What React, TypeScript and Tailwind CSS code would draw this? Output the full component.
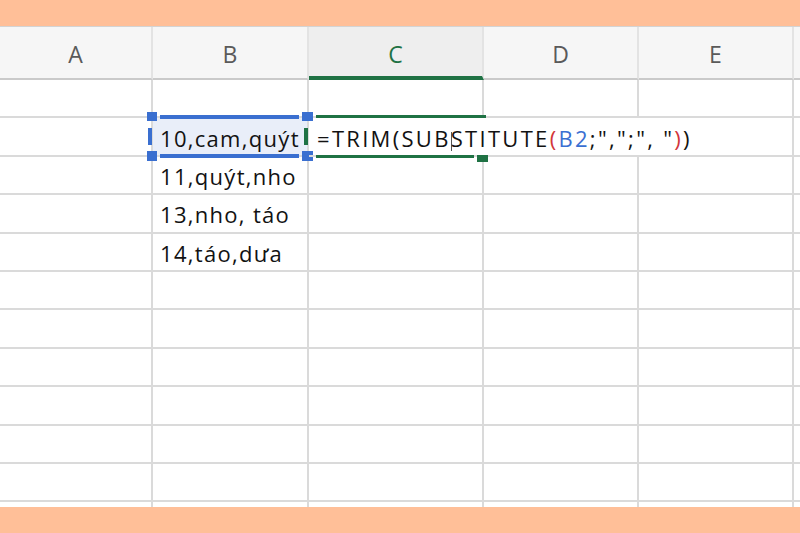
import React from "react";

const cols = [
  { key: "A", w: "w-[153px]" },
  { key: "B", w: "w-[156px]" },
  { key: "C", w: "w-[175px]" },
  { key: "D", w: "w-[155px]" },
  { key: "E", w: "w-[155px]" },
];

const values: Record<number, string> = {
  3: "11,quýt,nho",
  4: "13,nho, táo",
  5: "14,táo,dưa",
};

const font = { fontFamily: "'Open Sans', Lato, sans-serif" };

const Formula = () => (
  <span className="relative z-10 whitespace-nowrap pl-[8px] pt-[3px] text-[22px] tracking-[2.3px] text-[#121212]">
    =TRIM(SUB
    <span className="mr-[-1px] inline-block h-[19px] w-px bg-[#555] align-[-4px]" />
    STITUTE<span className="text-[#d2363a]">(</span>
    <span className="text-[#3a70d2]">B2</span>;",";", "
    <span className="text-[#d2363a]">)</span>)
  </span>
);

const SelectedCell = () => (
  <div className="relative flex w-[156px] shrink-0 items-center border-r-2 border-b-2 border-[#dadada] bg-[#e9eef9]">
    <span className="whitespace-nowrap pl-[7px] pt-[3px] text-[22px] tracking-[1.3px] text-[#121212]">10,cam,quýt</span>
    {/* selection frame */}
    <div className="absolute left-[7px] top-[-3px] h-1 w-[139px] bg-[#3a6fd0]" />
    <div className="absolute left-[7px] top-[36px] h-1 w-[139px] bg-[#3a6fd0]" />
    <div className="absolute left-[-5px] top-[10px] h-[17px] w-1 bg-[#3a6fd0]" />
    <div className="absolute left-[-6px] top-[-6px] h-[9px] w-[10px] bg-[#3a6fd0]" />
    <div className="absolute left-[-6px] top-[33px] h-[10px] w-[10px] bg-[#3a6fd0]" />
    <div className="absolute left-[149px] top-[-6px] h-[9px] w-[11px] bg-[#3a6fd0]" />
    <div className="absolute left-[149px] top-[33px] h-[10px] w-[11px] bg-[#3a6fd0]" />
  </div>
);

const FormulaCell = () => (
  <div className="relative flex w-[175px] shrink-0 items-center border-b-2 border-[#dadada]">
    <Formula />
    <div className="absolute left-[7px] top-[-3px] h-[3px] w-[170px] bg-[#1f7244]" />
    <div className="absolute left-[7px] top-[37px] h-[3px] w-[158px] bg-[#1f7244]" />
    <div className="absolute left-[168px] top-[37px] h-[7px] w-[11px] bg-[#1f7244]" />
    <div className="absolute left-[-5px] top-[10px] h-[17px] w-1 bg-[#1f7244]" />
  </div>
);

export default function App() {
  const rows = Array.from({ length: 12 }, (_, i) => i + 1);
  return (
    <div className="flex h-[533px] w-[800px] flex-col bg-[#ffbf98]" style={font}>
      <div className="h-[26px] shrink-0" />
      <div className="h-[481px] shrink-0 overflow-hidden border-t border-[#d3d3d3] bg-white">
        {/* column headers */}
        <div className="flex h-[53px] bg-[#f6f6f6]">
          {cols.map((c) =>
            c.key === "C" ? (
              <div
                key={c.key}
                className={`${c.w} flex shrink-0 items-center justify-center border-r-2 border-b-[4px] border-r-[#e3e3e3] border-b-[#1f7244] bg-[#eeeeee] pt-[5px] text-[23px] text-[#1f7244]`}
              >
                {c.key}
              </div>
            ) : (
              <div
                key={c.key}
                className={`${c.w} flex shrink-0 items-center justify-center border-r-2 border-b-2 border-r-[#e3e3e3] border-b-[#cacaca] pt-[3px] text-[23px] text-[#5a5a5a]`}
              >
                {c.key}
              </div>
            )
          )}
          <div className="flex-1 border-b-2 border-[#cacaca]" />
        </div>

        {rows.map((r) => (
          <div key={r} className="flex h-[38.4px] text-[#121212]">
            {r === 2 ? (
              <>
                <div className="w-[153px] shrink-0 border-r-2 border-b-2 border-[#dadada]" />
                <SelectedCell />
                <FormulaCell />
                <div className="w-[155px] shrink-0 border-b-2 border-[#dadada]" />
                <div className="w-[155px] shrink-0 border-r-2 border-b-2 border-[#dadada]" />
                <div className="flex-1 border-b-2 border-[#dadada]" />
              </>
            ) : (
              <>
                {cols.map((c) => (
                  <div
                    key={c.key}
                    className={`${c.w} flex shrink-0 items-center border-r-2 border-b-2 border-[#dadada]`}
                  >
                    {c.key === "B" && values[r] ? (
                      <span className="whitespace-nowrap pl-[7px] pt-[3px] text-[22px] tracking-[1.3px]">{values[r]}</span>
                    ) : null}
                  </div>
                ))}
                <div className="flex-1 border-b-2 border-[#dadada]" />
              </>
            )}
          </div>
        ))}
      </div>
      <div className="flex-1" />
    </div>
  );
}
